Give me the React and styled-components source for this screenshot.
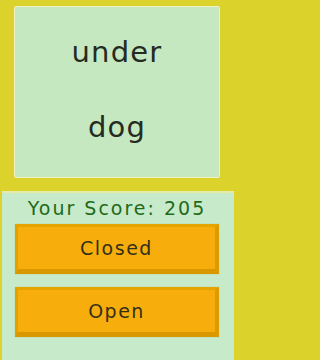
import styled, { createGlobalStyle } from 'styled-components';

const GlobalStyle = createGlobalStyle`
  html, body {
    margin: 0;
    padding: 0;
    background: #dbd22c;
    font-family: "DejaVu Sans", "Noto Sans", sans-serif;
  }
`;

const Screen = styled.div`
  width: 236px;
  height: 360px;
  display: flex;
  flex-direction: column;
  background: #dbd22c;
`;

const WordArea = styled.div`
  padding: 6px 16px 13px 14px;
`;

const Card = styled.div`
  height: 170px;
  box-sizing: content-box;
  border: 1px solid #f1f1c4;
  border-radius: 2px;
  background: #c5e8c0;
  display: flex;
  flex-direction: column;
  align-items: center;
`;

const Word = styled.div`
  font-size: 29px;
  line-height: 36px;
  letter-spacing: 1.2px;
  color: #262b22;
  margin-top: ${(p) => p.$top}px;
`;

const Panel = styled.div`
  flex: 1;
  margin: 0 2px;
  border-top: 2px solid #e6eba6;
  background: #c7eacb;
  padding: 3px 15px 0 13px;
  display: flex;
  flex-direction: column;
`;

const Score = styled.div`
  font-size: 19px;
  line-height: 24px;
  letter-spacing: 2px;
  color: #1f6a18;
  text-align: center;
  white-space: nowrap;
  margin-bottom: 4px;
`;

const Button = styled.button`
  height: 50px;
  box-sizing: border-box;
  margin: 0 0 ${(p) => p.$gap}px 0;
  padding: 0;
  border-style: solid;
  border-width: 3px 4px 5px 3px;
  border-color: #e6a400 #dc9c00 #d99700 #e3a100;
  background: #f7ae0c;
  font-family: inherit;
  font-size: 19px;
  letter-spacing: 1.5px;
  color: #33301a;
  display: flex;
  align-items: center;
  justify-content: center;
  box-shadow: 0 0 1px rgba(150, 120, 0, 0.35);
`;

export default function App() {
  return (
    <>
      <GlobalStyle />
      <Screen>
        <WordArea>
          <Card>
            <Word $top={27}>under</Word>
            <Word $top={39}>dog</Word>
          </Card>
        </WordArea>
        <Panel>
          <Score>Your Score: 205</Score>
          <Button $gap={13}>Closed</Button>
          <Button $gap={0}>Open</Button>
        </Panel>
      </Screen>
    </>
  );
}
